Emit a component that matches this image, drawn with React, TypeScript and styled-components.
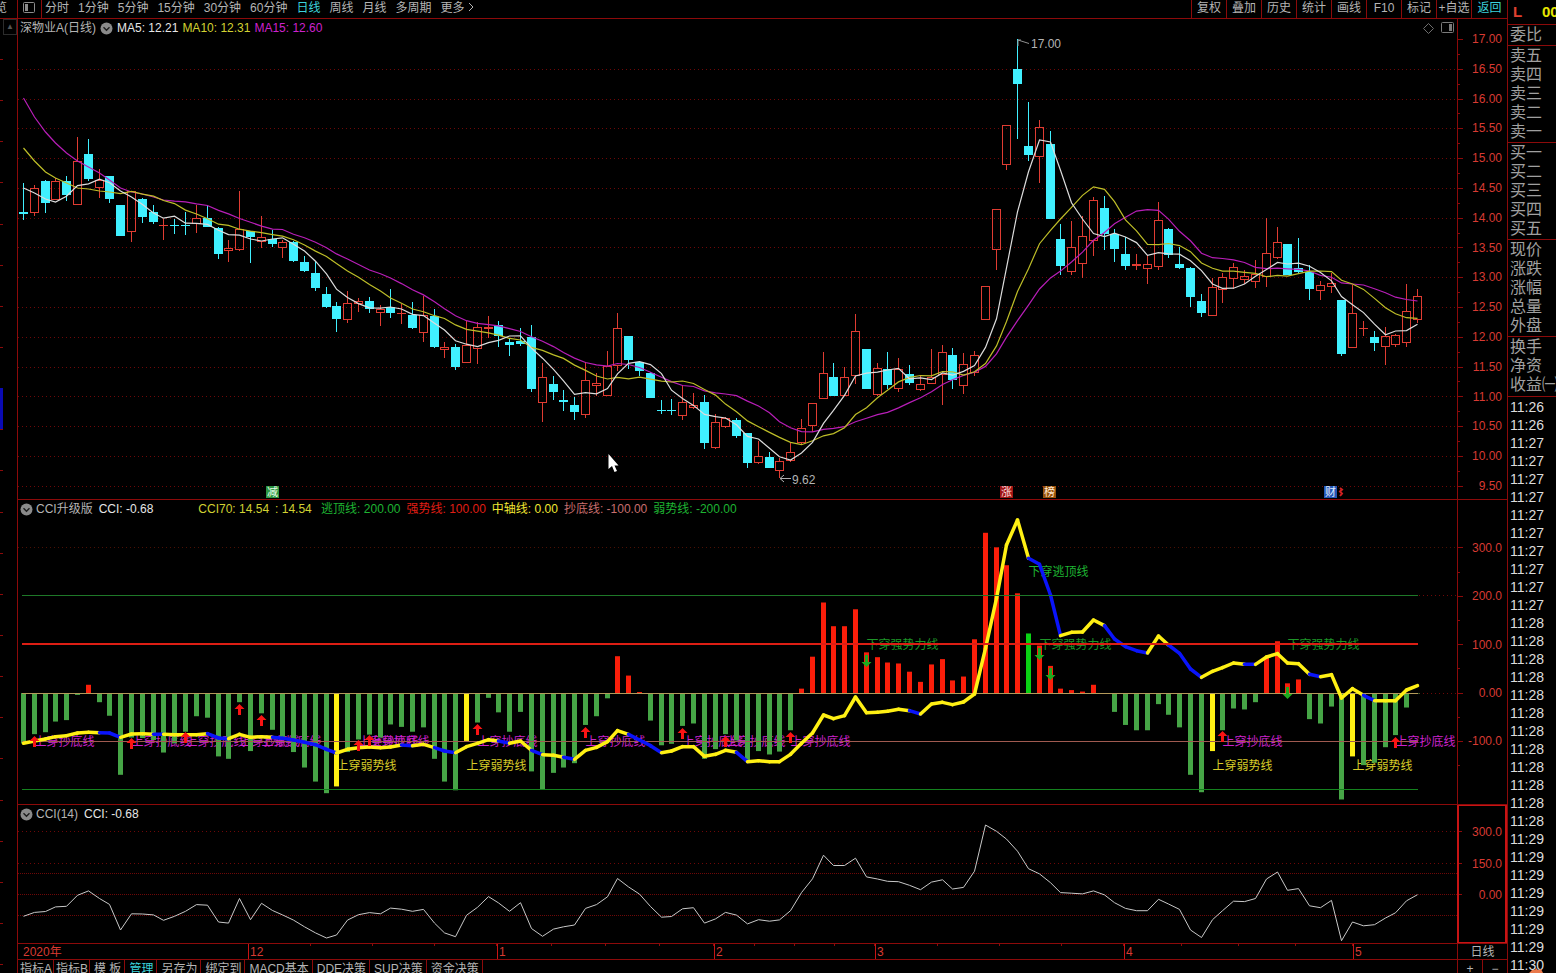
import React from "react";
import styled, { createGlobalStyle } from "styled-components";

const color = {
  frame: "#8c0a0a",
  bright: "#c81414",
  grid: "#6e0808",
  axisText: "#d83a32",
  up: "#e03c32",
  down: "#40f0ff",
  grey: "#b4b4b4",
  white: "#e6e6e6",
  yellow: "#d2d232",
  magenta: "#cc22cc",
  green: "#1eb432",
};

const GlobalStyle = createGlobalStyle`
  * { box-sizing: border-box; }
  body {
    margin: 0;
    background: #000;
    color: ${color.grey};
    font: 12px/16px "Liberation Sans", "Noto Sans CJK SC", sans-serif;
    overflow: hidden;
  }
  button {
    margin: 0;
    padding: 0;
    border: 0;
    background: none;
    color: inherit;
    font: inherit;
    white-space: nowrap;
  }
`;

/* ---------- series ---------- */

type Candle = ["U" | "D", number, number, number, number];

/* direction, high, body top, body bottom, low */
const candles: Candle[] = [
  ["D", 183, 212, 214, 220], ["U", 185, 188, 213, 216], ["D", 180, 181, 203, 213], ["U", 178, 181, 200, 200],
  ["D", 176, 181, 195, 201], ["U", 137, 161, 205, 205], ["D", 139, 154, 179, 181], ["U", 169, 180, 188, 198],
  ["D", 176, 176, 199, 203], ["D", 205, 205, 236, 236], ["U", 191, 191, 232, 242], ["D", 198, 199, 217, 223],
  ["D", 205, 212, 222, 224], ["U", 219, 225, 226, 240], ["D", 219, 225, 226, 234], ["D", 212, 225, 226, 235],
  ["U", 205, 218, 224, 233], ["D", 206, 218, 227, 227], ["D", 227, 228, 254, 259], ["U", 240, 248, 251, 262],
  ["U", 191, 229, 250, 251], ["D", 231, 231, 237, 263], ["U", 216, 237, 242, 248], ["D", 230, 239, 244, 247],
  ["U", 240, 242, 248, 258], ["D", 241, 242, 261, 262], ["D", 256, 262, 271, 272], ["D", 261, 273, 288, 291],
  ["D", 287, 294, 307, 308], ["D", 302, 306, 319, 332], ["U", 291, 303, 320, 323], ["U", 298, 301, 304, 312],
  ["D", 297, 301, 309, 313], ["U", 305, 309, 313, 326], ["D", 289, 307, 313, 318], ["U", 304, 313, 314, 324],
  ["D", 302, 315, 328, 329], ["U", 296, 315, 333, 342], ["D", 309, 316, 347, 348], ["U", 342, 347, 350, 358],
  ["D", 344, 347, 367, 370], ["U", 321, 345, 363, 363], ["U", 322, 327, 349, 364], ["U", 316, 327, 329, 338],
  ["D", 321, 325, 336, 347], ["D", 339, 342, 345, 356], ["D", 328, 341, 344, 346], ["D", 325, 337, 389, 392],
  ["U", 363, 377, 403, 422], ["D", 376, 384, 392, 400], ["D", 390, 400, 402, 411], ["D", 397, 405, 412, 420],
  ["U", 362, 380, 415, 418], ["U", 373, 383, 386, 396], ["U", 351, 366, 396, 396], ["U", 313, 328, 366, 371],
  ["D", 336, 336, 360, 369], ["D", 361, 362, 371, 376], ["D", 372, 373, 398, 398], ["D", 400, 410, 411, 414],
  ["D", 399, 410, 411, 415], ["U", 385, 402, 416, 420], ["U", 393, 405, 408, 409], ["D", 395, 402, 443, 449],
  ["U", 414, 422, 448, 449], ["U", 417, 418, 427, 428], ["D", 418, 420, 436, 438], ["D", 433, 433, 463, 468],
  ["U", 441, 456, 463, 464], ["D", 452, 457, 468, 468], ["U", 458, 461, 471, 478], ["U", 443, 452, 461, 462],
  ["U", 419, 428, 443, 445], ["U", 403, 403, 426, 432], ["U", 352, 373, 399, 399], ["D", 363, 377, 396, 396],
  ["U", 367, 377, 396, 396], ["U", 314, 331, 376, 384], ["D", 349, 349, 389, 389], ["U", 363, 368, 395, 396],
  ["D", 352, 369, 385, 389], ["U", 358, 369, 389, 392], ["D", 365, 374, 383, 385], ["U", 376, 384, 390, 391],
  ["U", 349, 377, 384, 384], ["U", 345, 352, 375, 405], ["D", 348, 355, 380, 389], ["U", 353, 364, 386, 394],
  ["U", 351, 355, 373, 376], ["U", 286, 286, 320, 320], ["U", 209, 209, 250, 270], ["U", 125, 125, 165, 170],
  ["D", 39, 69, 84, 139], ["D", 102, 146, 155, 161], ["U", 120, 127, 157, 183], ["D", 131, 144, 219, 219],
  ["D", 224, 239, 266, 275], ["U", 221, 247, 272, 275], ["U", 216, 236, 264, 278], ["U", 197, 200, 241, 256],
  ["D", 196, 208, 234, 250], ["D", 229, 234, 249, 262], ["D", 237, 254, 266, 270], ["U", 254, 264, 266, 270],
  ["U", 255, 264, 269, 284], ["U", 202, 220, 267, 270], ["D", 228, 229, 255, 258], ["D", 247, 264, 268, 269],
  ["D", 267, 268, 297, 307], ["D", 294, 301, 313, 317], ["U", 278, 287, 316, 316], ["U", 273, 277, 290, 303],
  ["U", 263, 267, 279, 289], ["U", 270, 276, 280, 284], ["U", 260, 274, 282, 288], ["U", 218, 253, 277, 287],
  ["U", 227, 242, 258, 259], ["D", 244, 244, 275, 275], ["D", 238, 268, 272, 273], ["D", 265, 272, 289, 300],
  ["U", 281, 285, 291, 300], ["U", 273, 283, 287, 293], ["D", 300, 300, 354, 356], ["U", 285, 313, 348, 348],
  ["U", 321, 328, 329, 336], ["D", 331, 337, 343, 351], ["U", 327, 336, 347, 365], ["U", 334, 335, 345, 347],
  ["U", 284, 311, 343, 347], ["U", 289, 296, 320, 323],
];

const cci = [
  -104, -85, -81, -59, -56, -4, 17, -19, -47, -169, -92, -93, -97, -123, -104, -80, -48, -51, -131, -136,
  -19, -120, -42, -76, -97, -122, -154, -183, -207, -193, -122, -96, -86, -92, -65, -70, -80, -71, -136, -183,
  -201, -99, -61, -10, -40, -80, -39, -162, -199, -165, -154, -145, -66, -48, -11, 76, 36, 2, -57, -108,
  -105, -68, -63, -136, -116, -85, -98, -140, -120, -127, -121, -77, 9, 75, 187, 138, 138, 173, 84, 74,
  63, 61, 44, 23, 59, 70, 26, 34, 111, 331, 301, 264, 206, 123, 98, 56, 9, 6, 3, 17,
  -2, -39, -66, -77, -77, -23, -45, -71, -169, -205, -120, -77, -32, -34, -19, 74, 107, 20, 28, -54,
  -63, -28, -220, -131, -149, -144, -112, -87, -30, -1,
];

/* CCI70, in thirds of a pixel below the top of its panel */
const cci70 = [
  745, 738, 732, 725, 722, 714, 712, 713, 714, 727, 717, 716, 718, 718, 719, 719, 719, 716, 729, 731,
  718, 727, 725, 727, 730, 735, 742, 749, 763, 774, 763, 758, 756, 758, 756, 750, 752, 748, 758, 768,
  773, 755, 745, 734, 738, 745, 738, 766, 779, 781, 787, 793, 766, 757, 740, 707, 718, 735, 752, 773,
  768, 755, 755, 784, 778, 766, 772, 800, 797, 800, 800, 778, 745, 714, 660, 671, 662, 606, 653, 652,
  649, 643, 647, 657, 627, 622, 629, 621, 597, 460, 310, 150, 75, 190, 208, 300, 422, 412, 411, 375,
  392, 432, 455, 467, 474, 423, 450, 475, 522, 547, 529, 518, 504, 508, 508, 486, 476, 504, 506, 538,
  545, 539, 609, 581, 601, 617, 617, 617, 585, 572,
];

const falling = new Set([
  8, 9, 13, 18, 19, 24, 25, 26, 27, 28, 29, 36, 39, 40, 45, 48, 51, 57, 58, 59, 67, 83, 94, 95, 96,
  101, 102, 103, 104, 107, 108, 109, 114, 120, 125,
]);

const yellowBars = new Set([29, 41, 110, 123]);

const LEFT = 18;
const WIDTH = 1439;
const PRICE = { top: 19, height: 480 };
const MID = { top: 500, height: 304 };
const LOW = { top: 805, height: 138 };

const px = (i: number) => Math.round(23 + (i * 1394) / 129) + 0.5;
const midY = (v: number) => 693 - v * 0.484;
const lowY = (v: number) => 894.5 - v * 0.21;

const closes = candles.map(([dir, , top, bottom]) => (dir === "U" ? top : bottom));

const average = (n: number, head: number[]) =>
  closes.map((_, i) =>
    i < head.length ? head[i] : closes.slice(i - n + 1, i + 1).reduce((a, b) => a + b, 0) / n
  );

const ma5 = average(5, [188, 193, 199, 202]);
const ma10 = average(10, [148, 161, 172, 178, 183, 188, 189, 191, 192]);
const ma15 = average(15, [98, 117, 132, 143, 153, 161, 167, 173, 180, 188, 192, 194, 197, 200]);

const points = (ys: number[]) => ys.map((y, i) => `${px(i)},${y.toFixed(1)}`).join(" ");

/* ---------- frame ---------- */

const Shell = styled.div`
  display: flex;
  height: 100vh;
  overflow: hidden;
`;

const Edge = styled.aside`
  flex: 0 0 17px;
  display: flex;
  flex-direction: column;
  overflow: hidden;
`;

const EdgeHead = styled.div`
  flex: 0 0 19px;
  display: flex;
  justify-content: flex-end;
  padding-right: 10px;
  border-bottom: 1px solid ${color.frame};
`;

const EdgeToggle = styled.button`
  align-self: flex-end;
  width: 14px;
  height: 16px;
  border: 1px solid #2c2c2c;
  color: #555;
  font-size: 8px;
  line-height: 12px;
`;

const EdgeScale = styled.svg`
  flex: 1;
  width: 4px;
  min-height: 0;
`;

const Main = styled.main`
  flex: 1;
  min-width: 0;
  display: flex;
  flex-direction: column;
  border-left: 1px solid ${color.frame};
`;

const Toolbar = styled.nav`
  flex: 0 0 19px;
  display: flex;
  justify-content: space-between;
  border-bottom: 1px solid ${color.frame};
`;

const Periods = styled.div`
  display: flex;
  gap: 9px;
`;

const LayoutButton = styled.button`
  width: 24px;
  margin-right: -6px;
  padding: 2px 0 0 4px;
  border-right: 1px solid ${color.frame};
  display: flex;
`;

const Period = styled.button<{ $active?: boolean }>`
  height: 16px;
  color: ${(p) => (p.$active ? "#3cd2dc" : color.grey)};
`;

const Actions = styled.div`
  display: flex;
`;

const Action = styled.button<{ $active?: boolean }>`
  width: ${(p) => (p.$active ? 36 : 35)}px;
  height: 18px;
  padding-bottom: 2px;
  border-left: 1px solid ${color.frame};
  color: ${(p) => (p.$active ? "#3cd2dc" : color.grey)};
`;

/* ---------- chart panels ---------- */

const Panel = styled.section<{ $share: number }>`
  flex: ${(p) => p.$share} 1 0;
  min-height: 0;
  display: flex;
  border-bottom: 1px solid ${color.frame};
`;

const Plot = styled.div`
  flex: 1;
  min-width: 0;
  position: relative;
  display: grid;
  grid-template: minmax(0, 1fr) / minmax(0, 1fr);
  overflow: hidden;
  > * { grid-area: 1 / 1; }
`;

const Drawing = styled.svg`
  width: 100%;
  height: 100%;
  min-height: 0;
  position: relative;
`;

const Header = styled.header<{ $gap?: number }>`
  height: 18px;
  display: flex;
  align-items: center;
  gap: ${(p) => p.$gap ?? 6}px;
  padding-left: 2px;
  white-space: nowrap;
`;

const Reading = styled.span<{ $color: string; $apart?: boolean }>`
  color: ${(p) => p.$color};
  margin-left: ${(p) => (p.$apart ? 39 : 0)}px;
`;

const Toggle = styled.button<{ $inline?: boolean }>`
  display: flex;
  margin-right: ${(p) => (p.$inline ? 0 : -3)}px;
`;

const Corner = styled.div`
  justify-self: end;
  height: 18px;
  display: flex;
  align-items: center;
  gap: 6px;
  padding-right: 3px;
`;

const Pin = styled.span.attrs<{ $x: number; $y: number }>((p) => ({
  style: { left: `${p.$x}%`, top: `${p.$y}%` },
}))<{ $x: number; $y: number; $color: string }>`
  position: absolute;
  margin-top: -8px;
  line-height: 18px;
  white-space: nowrap;
  color: ${(p) => p.$color};
`;

const Badge = styled(Pin)<{ $fill: string }>`
  width: 13px;
  height: 12px;
  margin: -6px 0 0 -6px;
  background: ${(p) => p.$fill};
  font-size: 11px;
  line-height: 12px;
  text-align: center;
`;

const Axis = styled.div<{ $active?: boolean }>`
  flex: 0 0 50px;
  display: flex;
  border: 0 solid ${(p) => (p.$active ? color.bright : color.frame)};
  border-width: ${(p) => (p.$active ? "1px 2px 1px 2px" : "0 0 0 1px")};
`;

const AxisTicks = styled.svg`
  width: 5px;
  height: 100%;
`;

const AxisLabels = styled.div<{ $top: number; $bottom: number; $right: number }>`
  flex: 1;
  display: flex;
  flex-direction: column;
  justify-content: space-between;
  align-items: flex-end;
  padding: ${(p) => p.$top}px ${(p) => p.$right}px ${(p) => p.$bottom}px 0;
  color: ${color.axisText};
  line-height: 14px;
`;

const Timeline = styled.div`
  flex: 0 0 16px;
  display: flex;
  border-bottom: 1px solid ${color.frame};
  line-height: 17px;
`;

const Months = styled.div`
  flex: 1;
  height: 15px;
  display: grid;
  grid-template-columns: 230fr 249fr 217fr 161fr 249fr 229fr 104fr;
  color: ${color.axisText};
`;

const Month = styled.span<{ $first?: boolean; $last?: boolean }>`
  height: 15px;
  padding-left: ${(p) => (p.$first ? 5 : 1)}px;
  border-left: ${(p) => (p.$first ? "0" : `1px solid ${color.bright}`)};
  background: ${(p) =>
    p.$first || p.$last
      ? "none"
      : `linear-gradient(to right, transparent calc(100% - 1px), ${color.frame} 0) 0 0 / 25% 2px repeat-x`};
`;

const TimelineUnit = styled.span`
  flex: 0 0 50px;
  height: 15px;
  border-left: 1px solid ${color.frame};
  text-align: center;
`;

const TabRow = styled.nav`
  flex: 0 0 13px;
  display: flex;
  justify-content: space-between;
  overflow: hidden;
`;

const Tabs = styled.div`
  display: flex;
`;

const Tab = styled.button<{ $active?: boolean; $tight?: boolean }>`
  height: 17px;
  padding: ${(p) => (p.$tight ? "0 1px 0 2px" : "0 3px 0 4px")};
  border-right: 1px solid ${color.frame};
  color: ${(p) => (p.$active ? "#3cd2dc" : color.grey)};
`;

const ZoomButton = styled.button`
  width: 25px;
  height: 17px;
  border-left: 1px solid ${color.frame};
`;

/* ---------- quotes ---------- */

const Quotes = styled.aside`
  flex: 0 0 49px;
  position: relative;
  border-left: 1px solid ${color.frame};
  overflow: hidden;
  white-space: nowrap;
  color: #a0a0a0;
`;

const QuoteHead = styled.div`
  height: 24px;
  display: flex;
  justify-content: space-between;
  padding-left: 5px;
  font-size: 15px;
  font-weight: bold;
  line-height: 23px;
`;

const Flag = styled.span`
  color: #e04030;
`;

const Code = styled.span`
  width: 14px;
  color: #e6e600;
`;

const QuoteGroup = styled.ul`
  margin: 0;
  padding: 0 0 1px 2px;
  border-top: 1px solid ${color.frame};
  list-style: none;
  font-size: 16px;
  line-height: 19px;
`;

const TickList = styled.ol`
  margin: 1px 0 0;
  padding: 1px 0 0 2px;
  border-top: 1px solid ${color.frame};
  list-style: none;
  color: #dcdcdc;
  font-size: 14px;
  line-height: 18px;
`;

const Spark = styled.svg`
  position: absolute;
  right: 13px;
  bottom: 0;
`;

const CollapseIcon = () => (
  <svg width="13" height="13" viewBox="0 0 13 13" fill="none">
    <circle cx="6.5" cy="6.5" r="6" fill="#8a8a8a" />
    <path d="M3.5 5.2 6.5 8.2 9.5 5.2" stroke="#1c1c1c" strokeWidth="1.4" />
  </svg>
);

interface FigureProps {
  panel: { top: number; height: number };
  label: string;
  children: React.ReactNode;
}

const Figure = ({ panel, label, children }: FigureProps) => (
  <Drawing
    role="img"
    aria-label={label}
    viewBox={`${LEFT} ${panel.top} ${WIDTH} ${panel.height}`}
    preserveAspectRatio="none"
    fill="none"
  >
    {children}
  </Drawing>
);

const at = (panel: { top: number; height: number }, x: number, y: number) => ({
  $x: ((x - LEFT) / WIDTH) * 100,
  $y: ((y - panel.top) / panel.height) * 100,
});

interface RuleProps {
  y: number;
  stroke?: string;
  dash?: string;
  from?: number;
  to?: number;
  width?: number;
}

const Rule = ({ y, stroke = color.grid, dash, from = LEFT, to = 1457, width = 1 }: RuleProps) => (
  <line x1={from} x2={to} y1={y} y2={y} stroke={stroke} strokeDasharray={dash} strokeWidth={width} shapeRendering="crispEdges" />
);

const prices = Array.from({ length: 16 }, (_, k) => 17 - k / 2);
const priceY = (p: number) => Math.round(39 + (17 - p) * 59.55) + 0.5;

const PriceChart = () => (
  <Panel $share={480}>
    <Plot>
      <Figure panel={PRICE} label="日线">
        {prices.slice(1).map((p) => (
          <Rule key={p} y={priceY(p)} dash="1 3" />
        ))}
        {candles.map(([dir, high, top, bottom, low], i) => {
          const x = px(i);
          const up = dir === "U";
          const thin = bottom - top < 2;
          const stroke = up ? color.up : color.down;
          return (
            <g key={i} stroke={stroke} shapeRendering="crispEdges">
              {high < top && <line x1={x} x2={x} y1={high} y2={top} />}
              {low > bottom && <line x1={x} x2={x} y1={bottom} y2={low} />}
              {thin ? (
                <line x1={x - 4.5} x2={x + 4.5} y1={top + 0.5} y2={top + 0.5} />
              ) : up ? (
                <rect x={x - 4} y={top + 0.5} width={8} height={bottom - top - 1} />
              ) : (
                <rect x={x - 4.5} y={top} width={9} height={bottom - top} fill={color.down} stroke="none" />
              )}
            </g>
          );
        })}
        <polyline points={points(ma15)} stroke="#b81eb8" strokeWidth="1.2" />
        <polyline points={points(ma10)} stroke="#bebe28" strokeWidth="1.2" />
        <polyline points={points(ma5)} stroke="#dcdcdc" strokeWidth="1.2" />
        <path d="M1029 43.5 1018 40M1018 46V40H1021" stroke="#909090" />
        <path d="M791 478.5H780M784 475 780 478.5 784 482" stroke="#b0b0b0" />
        <path d="M1340 488 1342 489.5 1340 491.5 1342 493.5 1340 496" stroke="#d02020" strokeWidth="2" />
        <path d="M608.5 454V469L612 466L614.5 472L617 471L614.5 465.5H618.5Z" fill="#fff" />
      </Figure>
      <Header $gap={4}>
        <span>深物业A(日线)</span>
        <Toggle $inline aria-label="折叠"><CollapseIcon /></Toggle>
        <Reading $color={color.white}>MA5: 12.21</Reading>
        <Reading $color={color.yellow}>MA10: 12.31</Reading>
        <Reading $color={color.magenta}>MA15: 12.60</Reading>
      </Header>
      <Corner>
        <svg width="13" height="13" fill="none" stroke="#6e6e6e">
          <path d="M6.5 1.5 11.5 6.5 6.5 11.5 1.5 6.5Z" />
        </svg>
        <svg width="13" height="12" fill="none" stroke="#7a7a7a">
          <rect x="0.5" y="0.5" width="12" height="10" rx="1" />
          <rect x="8" y="2" width="3" height="7" fill="#7a7a7a" stroke="none" />
        </svg>
      </Corner>
      <Pin {...at(PRICE, 1031, 43)} $color={color.grey}>17.00</Pin>
      <Pin {...at(PRICE, 792, 479)} $color={color.grey}>9.62</Pin>
      <Badge {...at(PRICE, 272, 492)} $color="#e8ffe8" $fill="#2c9440">减</Badge>
      <Badge {...at(PRICE, 1006, 492)} $color="#ffdcdc" $fill="#a01414">涨</Badge>
      <Badge {...at(PRICE, 1049, 492)} $color="#ffe8d0" $fill="#96500a">榜</Badge>
      <Badge {...at(PRICE, 1330, 492)} $color="#e0ecff" $fill="#2456b4">财</Badge>
    </Plot>
    <Axis>
      <AxisTicks viewBox="0 19 5 480" preserveAspectRatio="none" stroke={color.frame} shapeRendering="crispEdges">
        {prices.map((p) => (
          <path key={p} d={`M0 ${priceY(p)}H5M0 ${priceY(p - 0.25)}H2`} />
        ))}
      </AxisTicks>
      <AxisLabels $top={13} $bottom={6} $right={5}>
        {prices.map((p) => (
          <span key={p}>{p.toFixed(2)}</span>
        ))}
      </AxisLabels>
    </Axis>
  </Panel>
);

const upArrows: [number, number][] = [
  [1, 742], [10, 744], [15, 738], [20, 710], [22, 721], [31, 746], [32, 741], [42, 730],
  [52, 733], [61, 734], [65, 742], [71, 738], [111, 737], [127, 743],
];

const downArrows: [number, number][] = [[78, 660], [94, 653], [95, 673], [117, 692]];

const signals: [number, number, string, string][] = [
  ...upArrows.map(([i]): [number, number, string, string] => [i, 741, color.magenta, "上穿抄底线"]),
  ...[...yellowBars].map((i): [number, number, string, string] => [i, 765, "#d8cc28", "上穿弱势线"]),
  ...[78, 94, 117].map((i): [number, number, string, string] => [i, 644, "#1e9628", "下穿强势力线"]),
  [93, 571, color.green, "下穿逃顶线"],
];

const barColor = (v: number, i: number) =>
  yellowBars.has(i) ? "#fff014" : i === 93 ? "#0ad214" : v > 0 ? "#fa1e0a" : "#46a546";

const CciUpgrade = () => (
  <Panel $share={304}>
    <Plot>
      {signals.map(([i, y, tint, text], k) => (
        <Pin key={k} {...at(MID, px(i), y)} $color={tint}>{text}</Pin>
      ))}
      <Figure panel={MID} label="CCI升级版">
        <Rule y={547.5} stroke="#4b1004" dash="1 3" />
        <Rule y={595.5} dash="1 3" from={1419} />
        <Rule y={693.5} dash="1 3" from={1419} />
        {cci.map((v, i) => {
          const y = midY(v);
          return (
            <rect key={i} x={px(i) - 2.5} y={Math.min(y, 693)} width={5} height={Math.abs(y - 693)} fill={barColor(v, i)} />
          );
        })}
        <Rule y={693.5} from={22} to={1418} stroke="#b49a5a" />
        <Rule y={741.5} from={22} to={1418} stroke="#a05a50" />
        <Rule y={789.5} from={22} to={1418} stroke="#14821e" />
        {cci70.slice(1).map((y, k) => (
          <line
            key={k}
            x1={px(k)}
            y1={495 + cci70[k] / 3}
            x2={px(k + 1)}
            y2={495 + y / 3}
            stroke={falling.has(k + 1) ? "#0a14fa" : "#fff014"}
            strokeWidth="3.5"
            strokeLinecap="round"
          />
        ))}
        <Rule y={595.5} from={22} to={1418} stroke="#1e7828" />
        <Rule y={644} from={22} to={1418} stroke="#dc1e14" width={2} />
        {upArrows.map(([i, y]) => (
          <path key={i} d={`M${px(i)} ${y - 6}l5 5h-3.5v6h-3v-6h-3.5z`} fill="#fa1414" />
        ))}
        {downArrows.map(([i, y]) => (
          <path key={i} d={`M${px(i)} ${y + 7}l-5 -5h3.5v-7h3v7h3.5z`} fill="#1eaa1e" />
        ))}
      </Figure>
      <Header>
        <Toggle aria-label="折叠"><CollapseIcon /></Toggle>
        <span>CCI升级版</span>
        <Reading $color={color.white}>CCI: -0.68</Reading>
        <Reading $color={color.yellow} $apart>CCI70: 14.54</Reading>
        <Reading $color={color.yellow}>: 14.54&nbsp;</Reading>
        <Reading $color={color.green}>逃顶线: 200.00</Reading>
        <Reading $color="#e01e14">强势线: 100.00</Reading>
        <Reading $color="#f0e632">中轴线: 0.00</Reading>
        <Reading $color="#c86e6e">抄底线: -100.00</Reading>
        <Reading $color={color.green}>弱势线: -200.00</Reading>
      </Header>
    </Plot>
    <Axis>
      <AxisTicks viewBox="0 500 5 304" preserveAspectRatio="none" stroke={color.frame} shapeRendering="crispEdges">
        {[300, 200, 100, 0, -100].map((v) => (
          <path key={v} d={`M0 ${midY(v)}H5M0 ${midY(v - 50)}H2`} />
        ))}
      </AxisTicks>
      <AxisLabels $top={41} $bottom={56} $right={5}>
        <span>300.0</span>
        <span>200.0</span>
        <span>100.0</span>
        <span>0.00</span>
        <span>-100.0</span>
      </AxisLabels>
    </Axis>
  </Panel>
);

const CciPlain = () => (
  <Panel $share={138}>
    <Plot>
      <Figure panel={LOW} label="CCI(14)">
        <Rule y={831.5} dash="1 3" />
        <Rule y={863.5} dash="1 3" />
        <Rule y={873.5} dash="1 1" />
        <Rule y={894.5} dash="1 1" />
        <Rule y={915.5} dash="1 1" />
        <polyline points={points(cci.map(lowY))} stroke="#c8c8c8" />
      </Figure>
      <Header>
        <Toggle aria-label="折叠"><CollapseIcon /></Toggle>
        <span>CCI(14)</span>
        <Reading $color={color.white}>CCI: -0.68</Reading>
      </Header>
    </Plot>
    <Axis $active>
      <AxisTicks viewBox="0 806 5 136" preserveAspectRatio="none" stroke={color.frame} shapeRendering="crispEdges">
        <path d="M0 831.5H3M0 863.5H3M0 894.5H3" />
      </AxisTicks>
      <AxisLabels $top={19} $bottom={40} $right={3}>
        <span>300.0</span>
        <span>150.0</span>
        <span>0.00</span>
      </AxisLabels>
    </Axis>
  </Panel>
);

const periods = ["分时", "1分钟", "5分钟", "15分钟", "30分钟", "60分钟", "日线", "周线", "月线", "多周期"];
const actions = ["复权", "叠加", "历史", "统计", "画线", "F10", "标记", "+自选", "返回"];
const tabs = ["指标A", "指标B", "模 板", "管理", "另存为", "绑定到", "MACD基本", "DDE决策", "SUP决策", "资金决策"];

const quoteGroups = [
  ["委比"],
  ["卖五", "卖四", "卖三", "卖二", "卖一"],
  ["买一", "买二", "买三", "买四", "买五"],
  ["现价", "涨跌", "涨幅", "总量", "外盘"],
  ["换手", "净资", "收益㈠"],
];

const ticks = [
  ...Array(2).fill("11:26"),
  ...Array(10).fill("11:27"),
  ...Array(12).fill("11:28"),
  ...Array(7).fill("11:29"),
  "11:30",
];

const edgeMarks = Array.from({ length: 23 }, (_, k) => Math.round(59 + k * 41.14) + 0.5);

export default function App() {
  return (
    <Shell>
      <GlobalStyle />
      <Edge>
        <EdgeHead>览</EdgeHead>
        <EdgeToggle aria-label="收起">▲</EdgeToggle>
        <EdgeScale viewBox="0 35 4 938" preserveAspectRatio="none" stroke={color.frame} shapeRendering="crispEdges">
          {edgeMarks.map((y) => (
            <line key={y} x1="0" x2="3" y1={y} y2={y} />
          ))}
          <rect x="0" y="388" width="3" height="41" fill="#0a0ab4" stroke="none" />
        </EdgeScale>
      </Edge>
      <Main>
        <Toolbar>
          <Periods>
            <LayoutButton aria-label="布局">
              <svg width="13" height="12" fill="none" stroke="#8c8c8c">
                <rect x="1.5" y="0.5" width="11" height="10" rx="1" />
                <rect x="3" y="2" width="3" height="7" fill="#8c8c8c" stroke="none" />
              </svg>
            </LayoutButton>
            {periods.map((name) => (
              <Period key={name} $active={name === "日线"}>{name}</Period>
            ))}
            <Period>
              更多{" "}
              <svg width="6" height="10" fill="none" stroke={color.grey}>
                <path d="M1 1 5 5 1 9" />
              </svg>
            </Period>
          </Periods>
          <Actions>
            {actions.map((name) => (
              <Action key={name} $active={name === "返回"}>{name}</Action>
            ))}
          </Actions>
        </Toolbar>
        <PriceChart />
        <CciUpgrade />
        <CciPlain />
        <Timeline>
          <Months>
            <Month $first>2020年</Month>
            <Month>12</Month>
            <Month>1</Month>
            <Month>2</Month>
            <Month>3</Month>
            <Month>4</Month>
            <Month $last>5</Month>
          </Months>
          <TimelineUnit>日线</TimelineUnit>
        </Timeline>
        <TabRow>
          <Tabs>
            {tabs.map((name, i) => (
              <Tab key={name} $tight={i < 2} $active={name === "管理"}>{name}</Tab>
            ))}
          </Tabs>
          <Tabs>
            <ZoomButton>+</ZoomButton>
            <ZoomButton>−</ZoomButton>
          </Tabs>
        </TabRow>
      </Main>
      <Quotes>
        <QuoteHead>
          <Flag>L</Flag>
          <Code>000011</Code>
        </QuoteHead>
        {quoteGroups.map((group) => (
          <QuoteGroup key={group[0]}>
            {group.map((name) => (
              <li key={name}>{name}</li>
            ))}
          </QuoteGroup>
        ))}
        <TickList>
          {ticks.map((time, i) => (
            <li key={i}>{time}</li>
          ))}
        </TickList>
        <Spark width="14" height="5" viewBox="0 0 14 5" aria-hidden="true">
          <path d="M0 5 3 2 6 2 7 0 9 2 12 1 14 5Z" fill="#e8784a" />
        </Spark>
      </Quotes>
    </Shell>
  );
}
